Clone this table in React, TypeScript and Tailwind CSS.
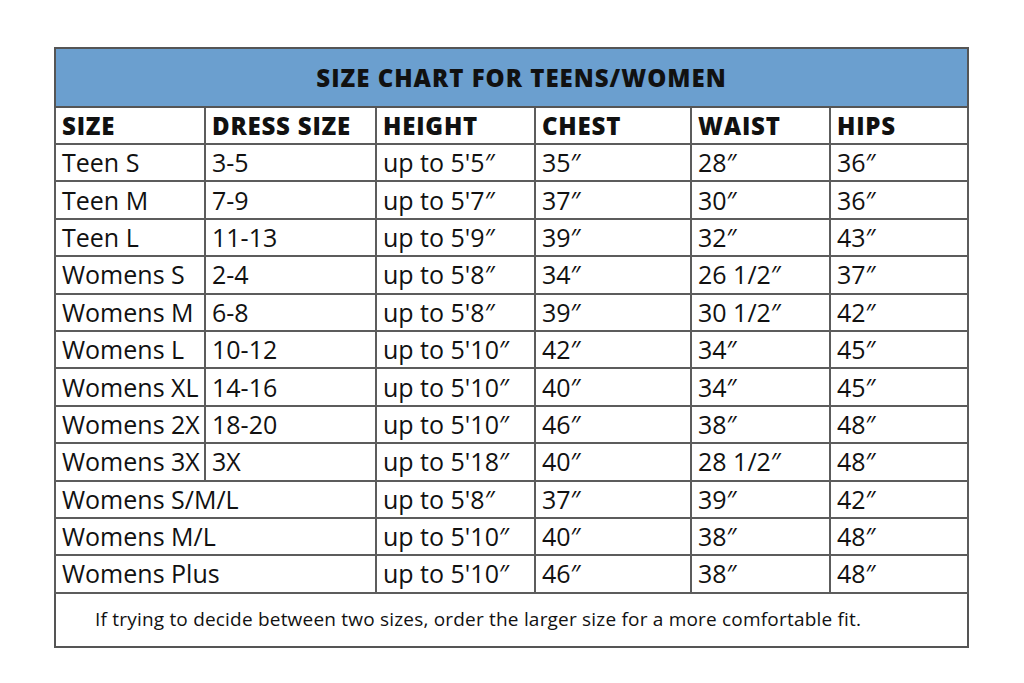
import React from "react";

const rows: [string, string | null, string, string, string, string][] = [
  ["Teen S", "3-5", "up to 5'5\u2033", "35\u2033", "28\u2033", "36\u2033"],
  ["Teen M", "7-9", "up to 5'7\u2033", "37\u2033", "30\u2033", "36\u2033"],
  ["Teen L", "11-13", "up to 5'9\u2033", "39\u2033", "32\u2033", "43\u2033"],
  ["Womens S", "2-4", "up to 5'8\u2033", "34\u2033", "26 1/2\u2033", "37\u2033"],
  ["Womens M", "6-8", "up to 5'8\u2033", "39\u2033", "30 1/2\u2033", "42\u2033"],
  ["Womens L", "10-12", "up to 5'10\u2033", "42\u2033", "34\u2033", "45\u2033"],
  ["Womens XL", "14-16", "up to 5'10\u2033", "40\u2033", "34\u2033", "45\u2033"],
  ["Womens 2X", "18-20", "up to 5'10\u2033", "46\u2033", "38\u2033", "48\u2033"],
  ["Womens 3X", "3X", "up to 5'18\u2033", "40\u2033", "28 1/2\u2033", "48\u2033"],
  ["Womens S/M/L", null, "up to 5'8\u2033", "37\u2033", "39\u2033", "42\u2033"],
  ["Womens M/L", null, "up to 5'10\u2033", "40\u2033", "38\u2033", "48\u2033"],
  ["Womens Plus", null, "up to 5'10\u2033", "46\u2033", "38\u2033", "48\u2033"],
];

const cell = "border-2 border-[#5c5c5c] px-[6px] py-0 text-left align-middle leading-none whitespace-nowrap";

export default function App() {
  return (
    <div className="w-[1024px] h-[683px] bg-white pt-[47px] pl-[54px] font-['Open_Sans',sans-serif] text-[#111]">
      <table className="w-[913px] border-collapse table-fixed border-2 border-[#555]">
        <colgroup>
          <col className="w-[150px]" />
          <col className="w-[171px]" />
          <col className="w-[159px]" />
          <col className="w-[156px]" />
          <col className="w-[139px]" />
          <col className="w-[138px]" />
        </colgroup>
        <thead>
          <tr className="h-[59px]">
            <th colSpan={6} className="border-2 border-[#555] bg-[#6b9fcf] text-center text-[24px] font-extrabold tracking-[1px] leading-none pl-5">
              SIZE CHART FOR TEENS/WOMEN
            </th>
          </tr>
          <tr className="h-[37px]">
            {["SIZE", "DRESS SIZE", "HEIGHT", "CHEST", "WAIST", "HIPS"].map((h) => (
              <th key={h} className={`${cell} text-[24px] font-extrabold tracking-[0.8px]`}>{h}</th>
            ))}
          </tr>
        </thead>
        <tbody>
          {rows.map((r) => (
            <tr key={r[0]} className="h-[37.4px] text-[25px]">
              {r[1] === null ? (
                <td colSpan={2} className={cell}>{r[0]}</td>
              ) : (
                <>
                  <td className={cell}>{r[0]}</td>
                  <td className={cell}>{r[1]}</td>
                </>
              )}
              <td className={cell}>{r[2]}</td>
              <td className={cell}>{r[3]}</td>
              <td className={cell}>{r[4]}</td>
              <td className={cell}>{r[5]}</td>
            </tr>
          ))}
          <tr className="h-[54px]">
            <td colSpan={6} className="border-2 border-[#555] pl-[39px] text-[19px] tracking-[0.2px] leading-none">
              If trying to decide between two sizes, order the larger size for a more comfortable fit.
            </td>
          </tr>
        </tbody>
      </table>
    </div>
  );
}
